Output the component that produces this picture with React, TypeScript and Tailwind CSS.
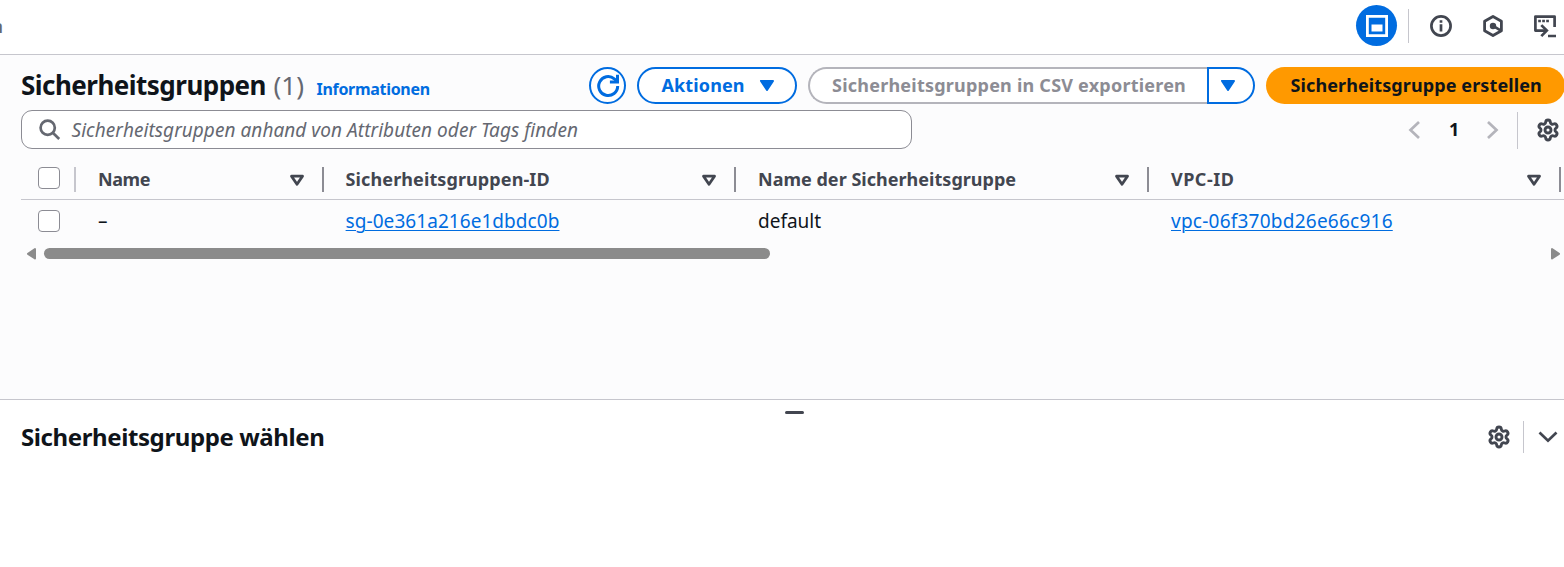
import React from 'react';
import { Settings } from 'lucide-react';

function CaretFilled() {
  return (
    <svg width="16" height="14" viewBox="0 0 16 14" className="shrink-0 text-[#006ce0]">
      <path d="M2 1.9h12L8 11z" fill="currentColor" stroke="currentColor" strokeWidth="2" strokeLinejoin="round" />
    </svg>
  );
}

function SortIcon() {
  return (
    <svg width="16" height="14" viewBox="0 0 16 14" className="shrink-0">
      <path d="M2.5 3.2h11L8 11.3z" fill="none" stroke="#424650" strokeWidth="2.8" strokeLinejoin="round" />
    </svg>
  );
}

function Checkbox() {
  return <span className="block h-[22px] w-[22px] shrink-0 rounded-[4px] border-[1.5px] border-[#8c8c94] bg-white" />;
}

function Gear() {
  return <Settings size={24} strokeWidth={2.9} className="shrink-0 text-[#424650]" />;
}

type ColumnProps = { label: string; spacing: string };

function Column({ label, spacing }: ColumnProps) {
  return (
    <div className="flex h-[25px] items-center justify-between border-r-2 border-[#8c8c94] pl-[22px] pr-[17px]">
      <span className={`whitespace-nowrap text-[18px] leading-[25px] font-bold text-[#424650] ${spacing}`}>{label}</span>
      <SortIcon />
    </div>
  );
}

const grid = 'grid grid-cols-[55px_247.6px_412.4px_413px_412px] items-center';

export default function App() {
  return (
    <div className="flex h-[567px] w-[1564px] flex-col overflow-hidden bg-white font-['Noto_Sans','Open_Sans',sans-serif] text-[#0f141a]">
      <header className="flex h-[55px] shrink-0 items-center justify-between border-b border-[#c6c6cd]">
        <div className="flex w-[3px] justify-end overflow-hidden pb-[2px]">
          <span className="text-[18px] leading-[24px] font-bold text-[#656871]">n</span>
        </div>
        <div className="flex items-center pb-[3px]">
          <div className="flex h-[41px] w-[41px] items-center justify-center rounded-full bg-[#006ce0]">
            <svg width="22" height="22" viewBox="0 0 22 22" fill="none">
              <path d="M1.4 1.4h19.2v19.2H1.4z" stroke="#fff" strokeWidth="2.8" />
              <path d="M5.5 9.5h11v7h-11z" fill="#fff" />
            </svg>
          </div>
          <div className="ml-[11px] h-[34px] w-px bg-[#c6c6cd]" />
          <svg width="22" height="22" viewBox="0 0 22 22" fill="none" className="ml-[21px]">
            <circle cx="11" cy="11" r="9.6" stroke="#424650" strokeWidth="2.7" />
            <path d="M11 9.3v7.2M11 5.2v2.6" stroke="#424650" strokeWidth="2.7" />
          </svg>
          <svg width="22" height="24" viewBox="0 0 22 24" fill="none" className="ml-[30px]">
            <path d="M11 2.5l8.4 4.8v9.4L11 21.5l-8.4-4.8V7.3z" stroke="#424650" strokeWidth="2.8" strokeLinejoin="round" />
            <circle cx="11" cy="12" r="3.2" fill="#424650" />
            <path d="M11.500 12.200l7 4.200" stroke="#424650" strokeWidth="2.7" />
          </svg>
          <svg width="24" height="24" viewBox="0 0 24 24" fill="none" className="mr-[8px] ml-[28px]">
            <path d="M22.600 13V2.600H3.400V16.600H14" stroke="#424650" strokeWidth="2.7" strokeLinejoin="round" />
            <path d="M6.200 7h2.700M10.200 7h2.700M14.200 7h2.700" stroke="#424650" strokeWidth="2.7" />
            <path d="M9.300 11.100l5.500 5.500-5.500 5.500M16 22h8" stroke="#424650" strokeWidth="2.7" />
          </svg>
        </div>
      </header>

      <main className="flex h-[344px] shrink-0 flex-col bg-[#fcfcfd] pl-[21px]">
        <div className="flex h-[49px] shrink-0 pt-[12px]">
          <div className="flex h-[37px] w-[568px] shrink-0 items-baseline whitespace-nowrap">
            <h1 className="text-[26px] leading-[37px] font-bold tracking-[-0.52px]">Sicherheitsgruppen</h1>
            <span className="ml-[7.5px] text-[26px] leading-[37px] text-[#656871]">(1)</span>
            <a className="ml-[12.5px] text-[16px] leading-[24px] font-bold tracking-[-0.3px] text-[#006ce0]">Informationen</a>
          </div>
          <button className="flex h-[37px] w-[37px] shrink-0 items-center justify-center rounded-full border-2 border-[#006ce0] bg-white">
            <svg width="24" height="24" viewBox="0 0 24 24" fill="none" stroke="#006ce0" strokeWidth="3" className="shrink-0">
              <path d="M21.7 12.1a9.5 9.5 0 1 1-3.4-7.300L21 7.500" />
              <path d="M21.500 0.800v7.200h-7.600" />
            </svg>
          </button>
          <button className="ml-[11px] flex h-[37px] w-[160px] shrink-0 items-center justify-between rounded-full border-2 border-[#006ce0] bg-white pr-[20px] pl-[22.5px] text-[18px] font-bold tracking-[0.12px] text-[#006ce0]">
            <span>Aktionen</span>
            <CaretFilled />
          </button>
          <div className="ml-[11px] flex shrink-0">
            <button className="h-[37px] w-[399px] rounded-l-full border-2 border-r-0 border-[#b4b4bb] bg-white pl-[22px] text-left text-[18px] leading-[33px] font-bold tracking-[0.22px] whitespace-nowrap text-[#8c8c94]">
              Sicherheitsgruppen in CSV exportieren
            </button>
            <button className="flex h-[37px] w-[48px] items-center rounded-r-full border-2 border-[#006ce0] bg-white pl-[11px]">
              <CaretFilled />
            </button>
          </div>
          <button className="ml-[11px] h-[37px] w-[299px] shrink-0 rounded-full bg-[#ff9900] pl-[24.5px] text-left text-[18px] leading-[37px] font-bold tracking-[0.1px] whitespace-nowrap">
            Sicherheitsgruppe erstellen
          </button>
        </div>

        <div className="mt-[6px] flex h-[39px] shrink-0 items-center">
          <div className="flex h-[39px] w-[891px] items-center rounded-[11px] border border-[#8c8c94] bg-white pl-[17px]">
            <svg width="22" height="22" viewBox="0 0 22 22" fill="none" stroke="#656871" strokeWidth="2.7">
              <circle cx="8.7" cy="8.7" r="7.1" />
              <path d="M13.8 13.8l6.4 6.2" />
            </svg>
            <span className="ml-[10.5px] text-[19px] leading-[26px] tracking-[0.05px] whitespace-nowrap text-[#656871] italic">
              Sicherheitsgruppen anhand von Attributen oder Tags finden
            </span>
          </div>
          <svg width="12" height="20" viewBox="0 0 12 20" fill="none" className="ml-[496px]">
            <path d="M11 2L2.5 10l8.5 8" stroke="#b4b4bb" strokeWidth="2.7" />
          </svg>
          <span className="ml-[29px] w-[12px] text-[18px] leading-[25px] font-bold">1</span>
          <svg width="12" height="20" viewBox="0 0 12 20" fill="none" className="ml-[26px]">
            <path d="M1 2l8.5 8L1 18" stroke="#b4b4bb" strokeWidth="2.7" />
          </svg>
          <div className="mt-[2px] mr-[18px] ml-[18px] h-[37px] w-px bg-[#c6c6cd]" />
          <Gear />
        </div>

        <div className={`${grid} mt-[18px] h-[33px] shrink-0 border-b border-[#c6c6cd] pb-[7px]`}>
          <div className="flex h-[25px] items-start justify-between border-r-2 border-[#c6c6cd] pl-[17px]">
            <Checkbox />
          </div>
          <Column label="Name" spacing="tracking-[-0.4px]" />
          <Column label="Sicherheitsgruppen-ID" spacing="tracking-[0.1px]" />
          <Column label="Name der Sicherheitsgruppe" spacing="tracking-[0.02px]" />
          <Column label="VPC-ID" spacing="tracking-[0.5px]" />
        </div>
        <div className={`${grid} h-[42px] shrink-0 text-[19px] leading-[26px] whitespace-nowrap`}>
          <div className="pl-[17px]"><Checkbox /></div>
          <span className="pl-[22px]">–</span>
          <a className="pl-[22px] tracking-[0.06px] text-[#006ce0]"><span className="underline decoration-1 underline-offset-[2px]">sg-0e361a216e1dbdc0b</span></a>
          <span className="pl-[22px]">default</span>
          <a className="pl-[22px] tracking-[0.24px] text-[#006ce0]"><span className="underline decoration-1 underline-offset-[2px]">vpc-06f370bd26e66c916</span></a>
        </div>
        <div className="mt-[5px] flex h-[13px] shrink-0 items-start pr-[3px] pl-[5px]">
          <svg width="10" height="13" viewBox="0 0 10 13" className="shrink-0">
            <path d="M9 2v9.5L2 6.800z" fill="#8b8b8b" stroke="#8b8b8b" strokeWidth="2" strokeLinejoin="round" />
          </svg>
          <div className="mt-[1px] ml-[8px] h-[11px] w-[726px] rounded-full bg-[#8b8b8b]" />
          <svg width="10" height="13" viewBox="0 0 10 13" className="ml-auto shrink-0">
            <path d="M1 2v9.5l7-4.700z" fill="#8b8b8b" stroke="#8b8b8b" strokeWidth="2" strokeLinejoin="round" />
          </svg>
        </div>
      </main>

      <section className="flex flex-1 flex-col border-t border-[#c6c6cd] bg-white">
        <div className="mt-[11px] ml-[784.5px] h-[3px] w-[19px] rounded-full bg-[#424650]" />
        <div className="mt-[7px] flex h-[32px] items-center pl-[21px]">
          <h2 className="text-[24px] leading-[32px] font-bold tracking-[-0.4px] whitespace-nowrap">Sicherheitsgruppe wählen</h2>
          <div className="ml-auto flex items-center">
            <Gear />
            <div className="ml-[12px] h-[32px] w-px bg-[#c6c6cd]" />
            <svg width="20" height="12" viewBox="0 0 20 12" fill="none" className="mr-[6px] ml-[14px]">
              <path d="M1.5 1.5L10 9.7l8.5-8.2" stroke="#424650" strokeWidth="2.7" />
            </svg>
          </div>
        </div>
      </section>
    </div>
  );
}
